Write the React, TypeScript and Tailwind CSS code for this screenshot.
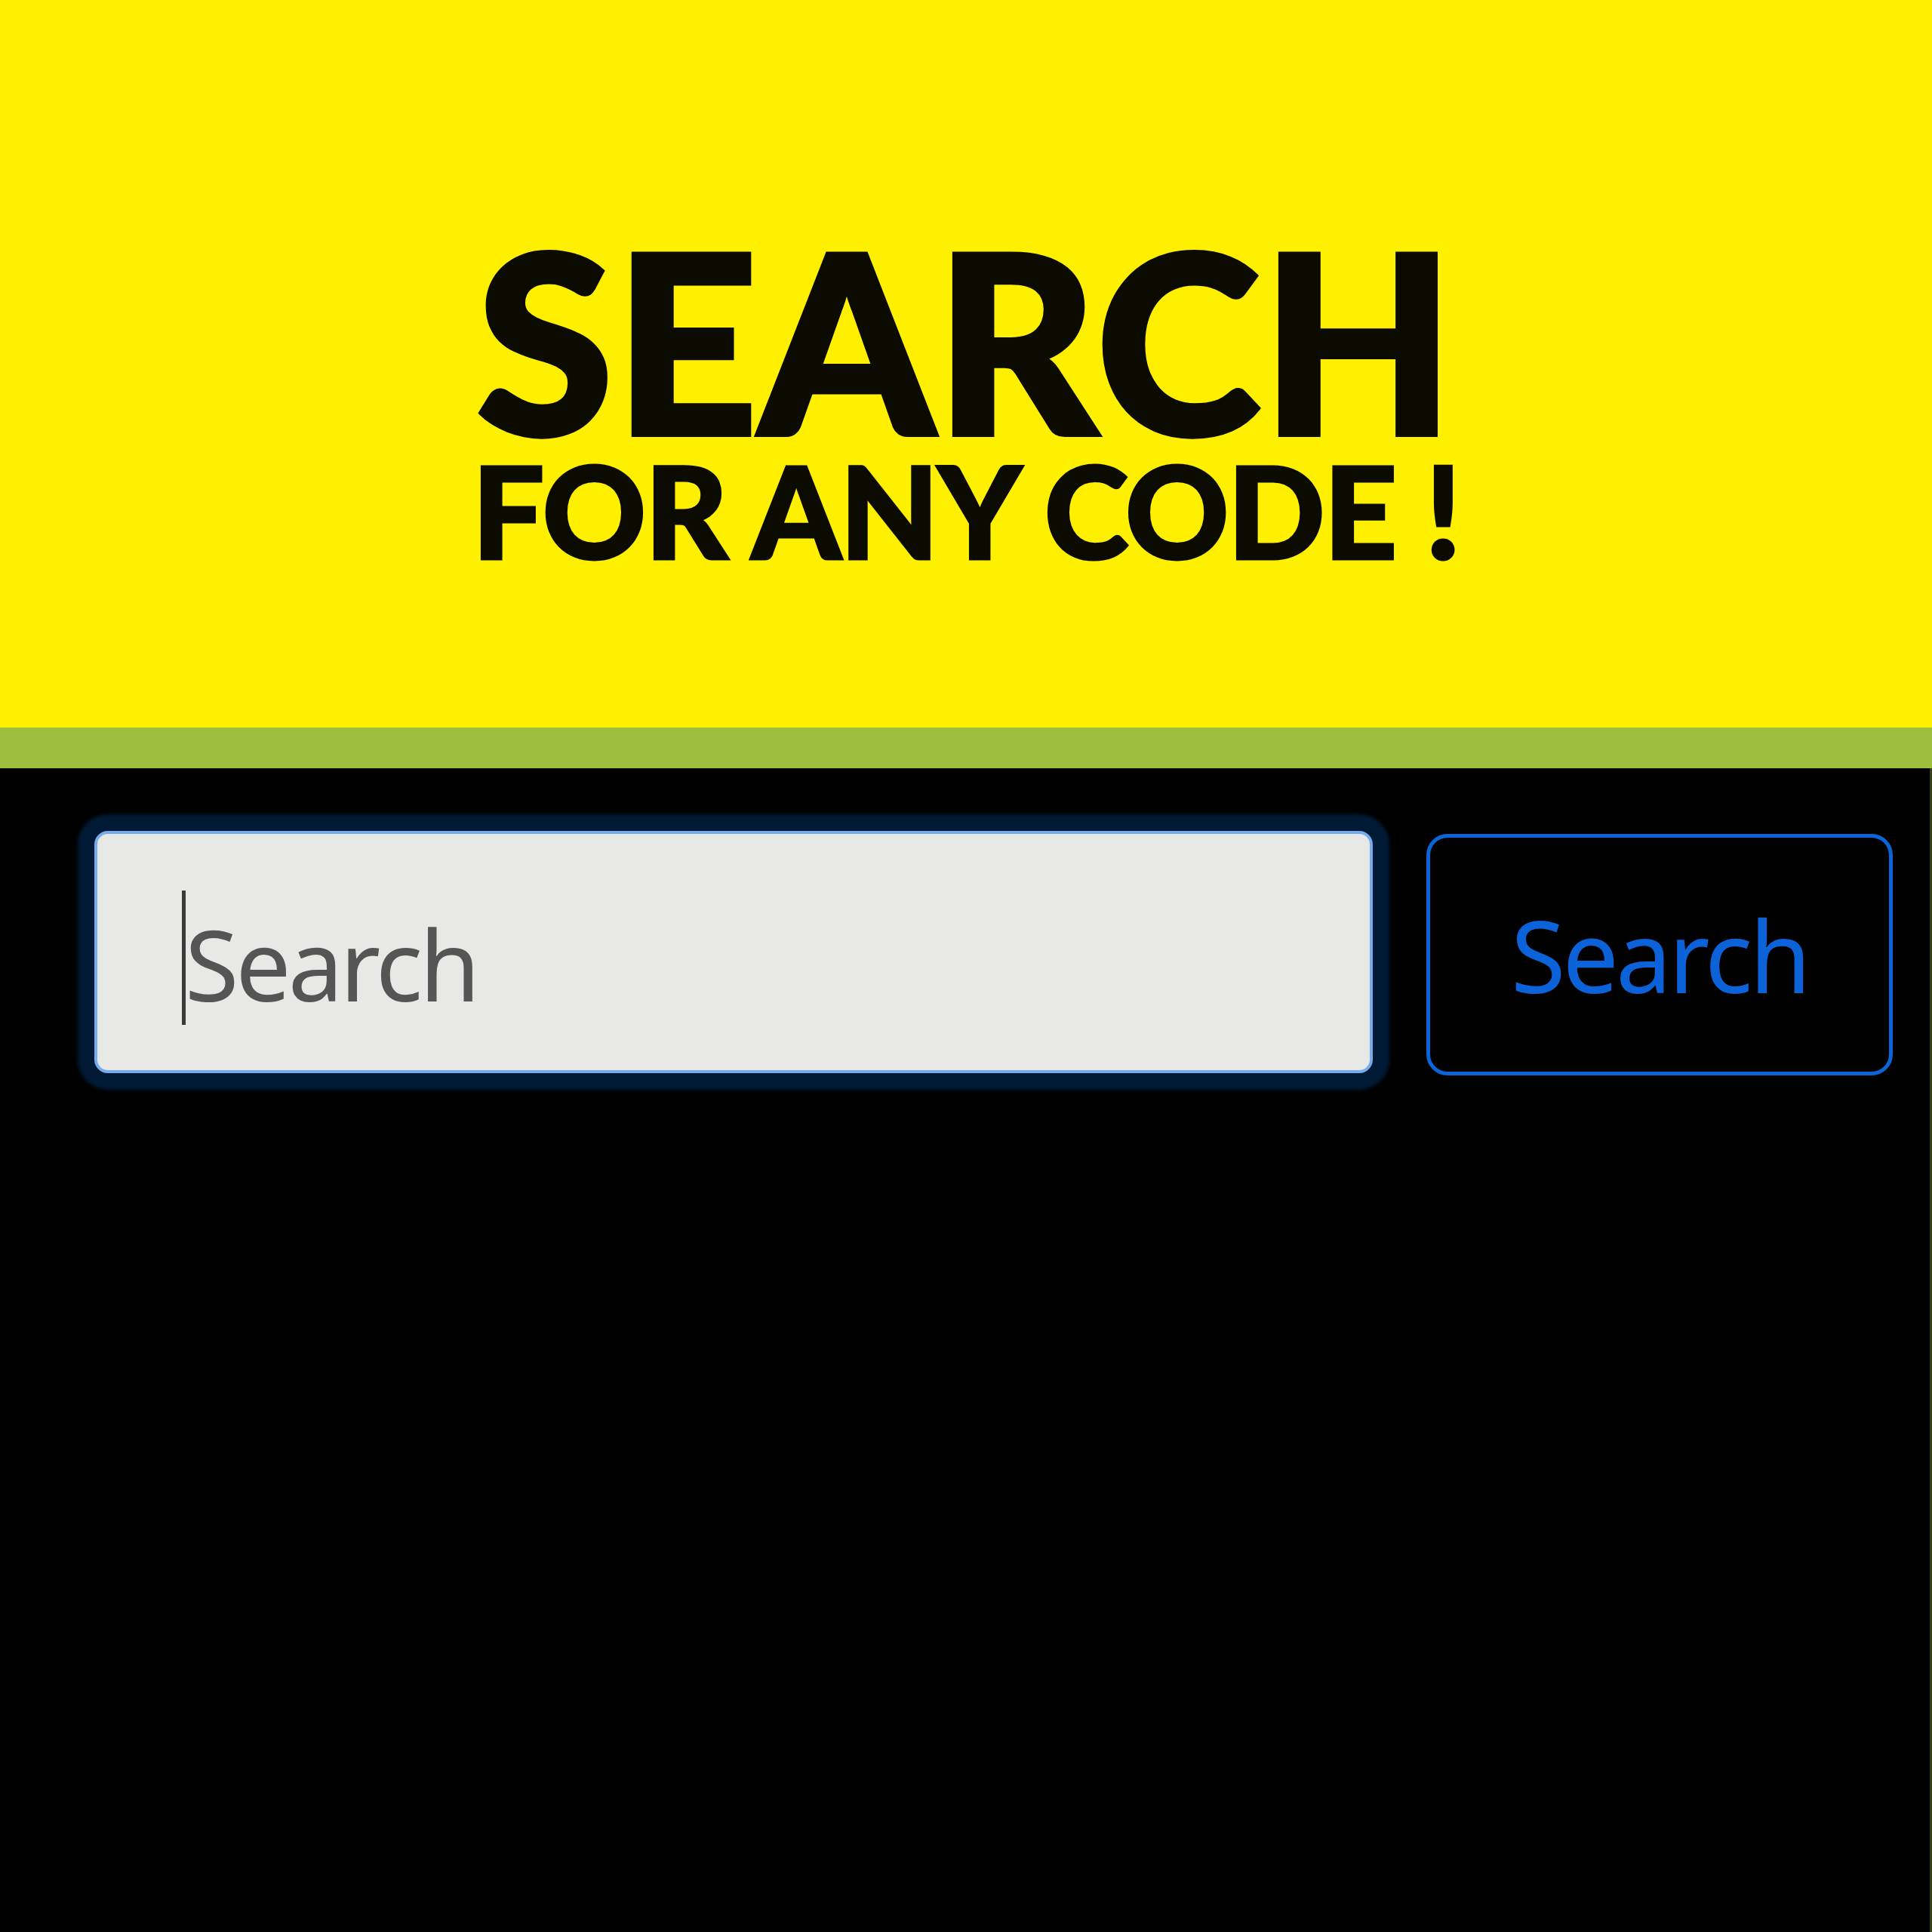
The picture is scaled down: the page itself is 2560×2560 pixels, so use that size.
export default function App() {
  return (
    <main className="flex flex-col w-[2560px] h-[2560px] bg-black">
      <header className="h-[964px] bg-[#fff000] flex flex-col items-center pt-[316px] text-[#0b0b02] font-['Lato',sans-serif] font-black">
        <h1 className="text-[330px] leading-[0.8] tracking-[2px] [-webkit-text-stroke:6px_#0b0b02]">SEARCH</h1>
        <p className="text-[170px] leading-none tracking-[-2px] mt-[10px] [-webkit-text-stroke:3px_#0b0b02]">FOR ANY CODE !</p>
      </header>
      <div className="h-[54px] bg-[#9bbe3c]" />
      <section className="flex-1 flex items-start gap-[71px] pl-[125px] pt-[83px] border-r-[3px] border-[#34401a]">
        <div className="relative">
          <input
            type="text"
            placeholder="Search"
            className="w-[1694px] h-[321px] rounded-[18px] border-[4px] border-[#74acec] bg-[#e8e8e6] pl-[116px] pt-[30px] text-[130px] tracking-[-4px] font-['Noto_Sans',sans-serif] text-[#333] placeholder:text-[#555] outline-none shadow-[0_0_4px_22px_#001a35]"
          />
          <span className="absolute left-[116px] top-[79px] w-[5px] h-[178px] bg-[#3a3a3a] pointer-events-none" />
        </div>
        <button className="mt-[4px] w-[618px] h-[320px] rounded-[28px] border-[5px] border-[#0a66d8] bg-black text-[#0b62d9] text-[132px] tracking-[-4px] font-['Noto_Sans',sans-serif]">
          Search
        </button>
      </section>
    </main>
  )
}
